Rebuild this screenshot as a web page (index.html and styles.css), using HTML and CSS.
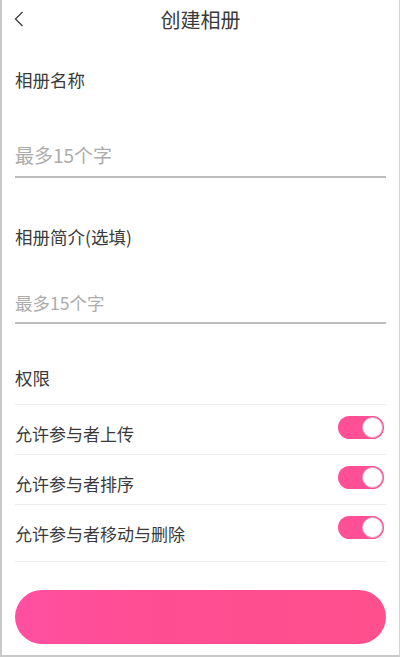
FILE: index.html
```html
<!DOCTYPE html>
<html lang="zh">
<head>
  <meta charset="UTF-8">
  <title>创建相册</title>
  <link rel="stylesheet" href="styles.css">
</head>
<body>

  <div class="screen">
    <div class="header">
      <span class="back">
        <svg width="10" height="16" viewBox="0 0 10 16"><polyline points="8.5,1 1.5,8 8.5,15" fill="none" stroke="#444" stroke-width="1.4"/></svg>
      </span>
      <h1>创建相册</h1>
    </div>

    <form class="form">
      <div class="field-label first">相册名称</div>
      <input class="field big" type="text" placeholder="最多15个字">

      <div class="field-label second">相册简介(选填)</div>
      <input class="field small" type="text" placeholder="最多15个字">

      <div class="perm-title">权限</div>
      <div class="perm-row">
        <span>允许参与者上传</span>
        <span class="toggle"><span class="knob"></span></span>
      </div>
      <div class="perm-row">
        <span>允许参与者排序</span>
        <span class="toggle"><span class="knob"></span></span>
      </div>
      <div class="perm-row last">
        <span>允许参与者移动与删除</span>
        <span class="toggle"><span class="knob"></span></span>
      </div>

      <button type="button" class="submit"></button>
    </form>
  </div>

</body>
</html>
```

FILE: styles.css
```css
* { box-sizing: border-box; }
body { margin: 0; background: #fff; font-family: "Noto Sans CJK SC", "Noto Sans", sans-serif; color: #3a3a3a; }
.screen { width: 400px; height: 657px; border-left: 2px solid #c9c9c9; border-right: 1px solid #d4d4d4; border-bottom: 2px solid #c9c9c9; overflow: hidden; }

.header { height: 40px; display: flex; align-items: center; justify-content: center; position: relative; padding-bottom: 2px; }
.header h1 { margin: 0; font-size: 20px; font-weight: normal; color: #3a3a3a; }
.back { position: absolute; left: 12px; top: 11px; display: flex; }

.form { padding: 0 13px; }
.field-label { font-size: 17.5px; line-height: 24px; }
.field-label.first { margin-top: 28px; }
.field-label.second { margin-top: 47px; }

.field { display: block; width: 100%; border: none; border-bottom: 2px solid #bdbdbd; outline: none; padding: 0; font-family: inherit; color: #333; background: transparent; }
.field::placeholder { color: #acacac; }
.field.big { margin-top: 40px; height: 46px; font-size: 19px; }
.field.small { margin-top: 33px; height: 42px; font-size: 17.5px; }

.perm-title { margin-top: 31px; height: 50px; line-height: 46px; font-size: 17.5px; border-bottom: 1px solid #ececec; }
.perm-row { height: 50px; display: flex; align-items: center; justify-content: space-between; font-size: 17px; border-bottom: 1px solid #ececec; padding-right: 2px; }
.perm-row span:first-child { padding-top: 7px; }
.perm-row.last { height: 57px; padding-bottom: 7px; }
.perm-row .toggle { margin-top: -4px; }

.toggle { width: 46px; height: 23px; border-radius: 12px; background: #ff4f95; display: flex; justify-content: flex-end; align-items: center; padding-right: 1px; }
.knob { width: 21px; height: 21px; border-radius: 50%; background: #fff; border: 1px solid #f3a0c2; }

.submit { display: block; width: 100%; height: 54px; margin-top: 28px; border: none; border-radius: 27px; background: linear-gradient(90deg, #ff4fa0, #ff4d92 40%, #ff4f8c); cursor: pointer; }
```
